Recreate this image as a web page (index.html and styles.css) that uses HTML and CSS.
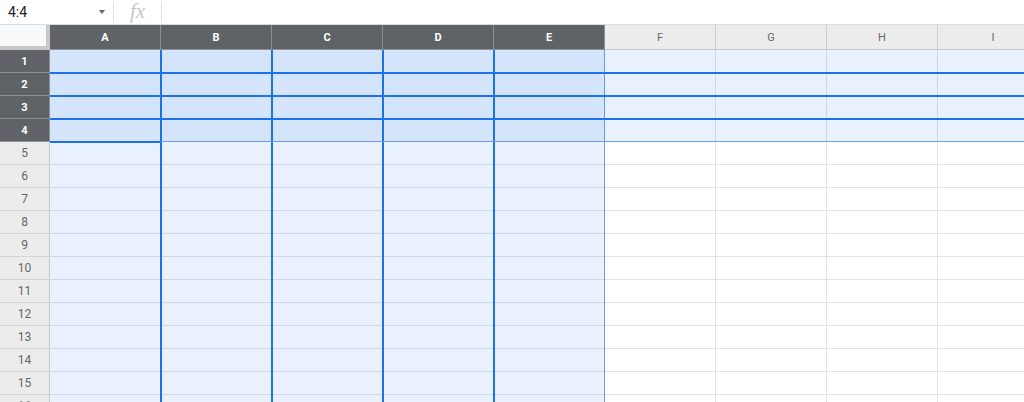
FILE: index.html
```html
<!DOCTYPE html>
<html>
    <head>
        <title>Sheet</title>
        <link rel="stylesheet" href="styles.css">
    </head>
    <body>
        <div class="formula-bar">
            <div class="name-box">
                <span class="name-text">4:4</span>
                <span class="name-arrow"></span>
            </div>
            <div class="fx">fx</div>
            <div class="formula-input"></div>
        </div>

        <div class="sheet">
            <div class="cells js-cells"></div>

            <div class="selection">
                <div class="col-sel col-a"></div>
                <div class="col-sel col-b"></div>
                <div class="col-sel col-c"></div>
                <div class="col-sel col-d"></div>
                <div class="col-sel col-e col-last"></div>
                <div class="row-sel row-1"></div>
                <div class="row-sel row-2"></div>
                <div class="row-sel row-3"></div>
                <div class="row-sel row-4 row-last"></div>
                <div class="active-cell"></div>
            </div>
        </div>

        <script>
            const letters = ['A', 'B', 'C', 'D', 'E', 'F', 'G', 'H', 'I'];
            const selectedCols = 5;
            const selectedRows = 4;
            let html = '<div class="corner"></div>';

            letters.forEach((letter, i) => {
                const cls = i < selectedCols ? 'col-head selected' : 'col-head';
                html += `<div class="${cls}">${letter}</div>`;
            });

            for (let row = 1; row <= 16; row++) {
                const cls = row <= selectedRows ? 'row-head selected' : 'row-head';
                html += `<div class="${cls}">${row}</div>`;
                for (let col = 0; col < letters.length; col++) {
                    html += '<div class="cell"></div>';
                }
            }

            document.querySelector('.js-cells').innerHTML = html;
        </script>
    </body>
</html>
```

FILE: styles.css
```css
body{
    margin: 0;
    background-color: white;
    font-family: Roboto, Arial, Helvetica, sans-serif;
    overflow: hidden;
}
.formula-bar{
    display: flex;
    align-items: center;
    height: 24px;
    border-bottom: 1px solid #dadce0;
    background-color: white;
}
.name-box{
    display: flex;
    align-items: center;
    justify-content: space-between;
    box-sizing: border-box;
    width: 114px;
    height: 20px;
    padding-left: 8px;
    padding-right: 8px;
    border-right: 1px solid #e3e3e3;
}
.name-text{
    font-size: 14px;
    color: #222;
}
.name-arrow{
    width: 0;
    height: 0;
    border-left: 3px solid transparent;
    border-right: 3px solid transparent;
    border-top: 4px solid #666;
}
.fx{
    box-sizing: border-box;
    width: 48px;
    height: 20px;
    line-height: 18px;
    text-align: center;
    font-family: "Liberation Serif", serif;
    font-style: italic;
    font-size: 21px;
    color: #c6c6c6;
    border-right: 1px solid #e3e3e3;
}
.formula-input{
    flex: 1;
}
.sheet{
    display: grid;
    overflow: hidden;
    width: 1024px;
}
.cells,
.selection{
    grid-area: 1 / 1;
    display: grid;
    grid-template-columns: 50px repeat(9, 111px);
    grid-template-rows: 25px repeat(16, 23px);
}
.selection{
    pointer-events: none;
}
.corner{
    box-sizing: border-box;
    background-color: #f8f9fa;
    border-right: 4px solid #c7c7c7;
    border-bottom: 4px solid #c7c7c7;
}
.col-head{
    box-sizing: border-box;
    display: flex;
    align-items: center;
    justify-content: center;
    background-color: #ececec;
    border-right: 1px solid #cfcfcf;
    border-bottom: 1px solid #c4c4c4;
    font-size: 11px;
    color: #666;
}
.row-head{
    box-sizing: border-box;
    display: flex;
    align-items: center;
    justify-content: center;
    background-color: #ececec;
    border-right: 1px solid #c4c4c4;
    border-bottom: 1px solid #d6d6d6;
    font-size: 12px;
    color: #666;
}
.col-head.selected,
.row-head.selected{
    background-color: #5f6368;
    color: white;
    font-weight: bold;
    border-right-color: #8c9095;
    border-bottom-color: #8c9095;
}
.row-head.selected{
    font-size: 11px;
}
.cell{
    box-sizing: border-box;
    border-right: 1px solid #e2e3e3;
    border-bottom: 1px solid #e2e3e3;
}

/* selection overlay */
.col-sel{
    grid-row: 2 / -1;
    margin-right: -1px;
    background-color: rgba(26, 115, 232, 0.1);
    border-right: 2px solid #1a73e8;
}
.col-a{ grid-column: 2; }
.col-b{ grid-column: 3; }
.col-c{ grid-column: 4; }
.col-d{ grid-column: 5; }
.col-e{ grid-column: 6; }
.col-sel.col-last{
    margin-right: 0;
    border-right: 1px solid #6d9de6;
}
.row-sel{
    grid-column: 2 / -1;
    margin-bottom: -1px;
    background-color: rgba(26, 115, 232, 0.1);
    border-bottom: 2px solid #1a73e8;
}
.row-1{ grid-row: 2; }
.row-2{ grid-row: 3; }
.row-3{ grid-row: 4; }
.row-4{ grid-row: 5; }
.row-sel.row-last{
    margin-bottom: 0;
    border-bottom: 1px solid #6d9de6;
}
.active-cell{
    grid-column: 2;
    grid-row: 5;
    margin-bottom: -1px;
    border-bottom: 2px solid #1a73e8;
}
```
